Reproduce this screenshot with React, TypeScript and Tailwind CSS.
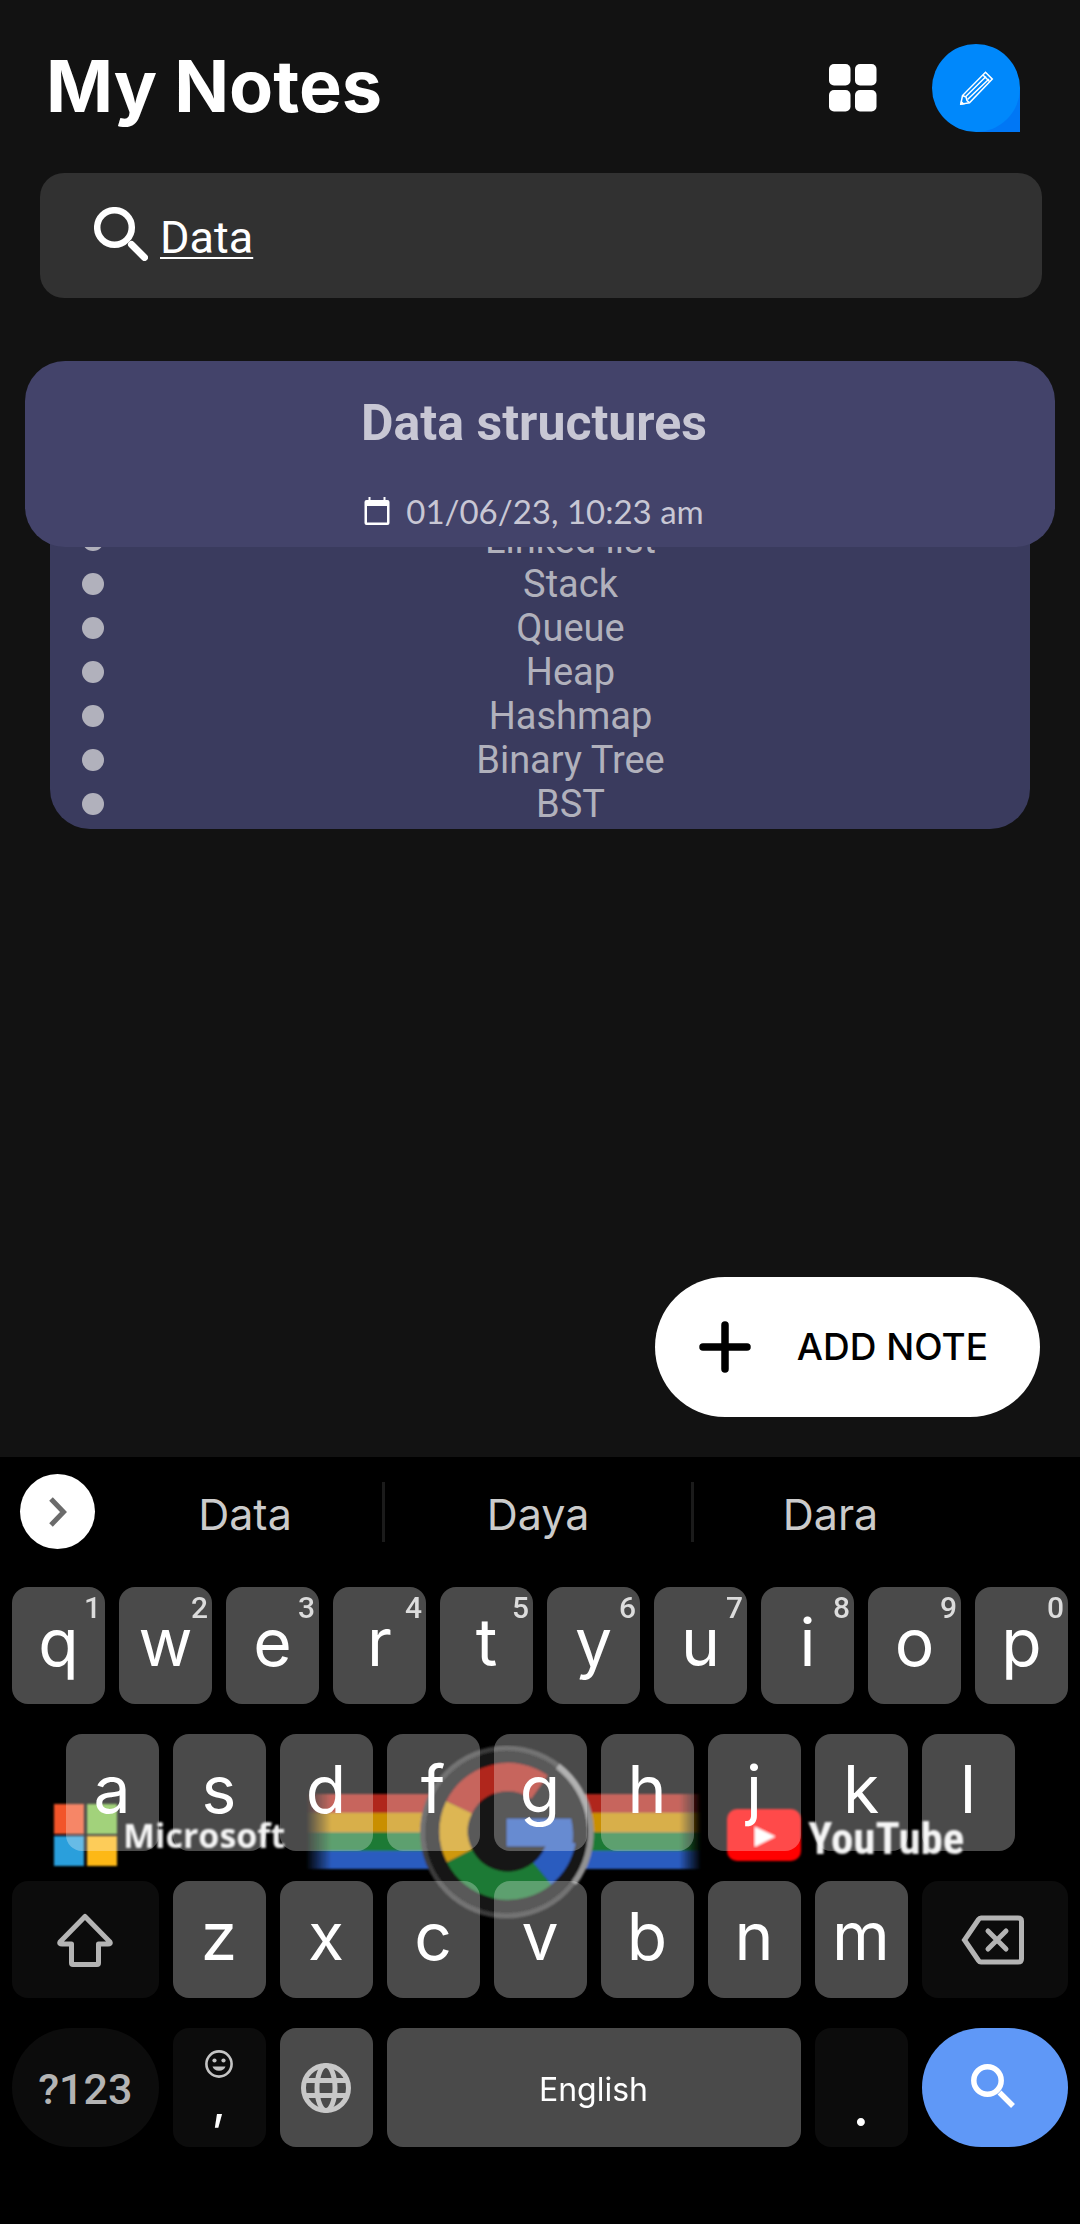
import React from "react";

const listItems = ["Linked list", "Stack", "Queue", "Heap", "Hashmap", "Binary Tree", "BST"];
const topRow = ["q", "w", "e", "r", "t", "y", "u", "i", "o", "p"];
const homeRow = ["a", "s", "d", "f", "g", "h", "j", "k", "l"];
const bottomRow = ["z", "x", "c", "v", "b", "n", "m"];

function GridIcon() {
  return (
    <svg viewBox="0 0 48 48" className="size-12" fill="white" aria-hidden="true">
      <rect x="0" y="0" width="21.5" height="21.5" rx="5" />
      <rect x="26" y="0" width="21.5" height="21.5" rx="5" />
      <rect x="0" y="26" width="21.5" height="21.5" rx="5" />
      <rect x="26" y="26" width="21.5" height="21.5" rx="5" />
    </svg>
  );
}

function PencilBadge() {
  return (
    <svg viewBox="0 0 88 88" className="size-22" aria-hidden="true">
      <path d="M44 44H88V88H44Z" fill="#0077f5" />
      <circle cx="44" cy="44" r="44" fill="#0088fb" />
      <g fill="none" stroke="white" strokeWidth="1.5">
        <path d="M28.8 60.2L30.5 51.5L53.5 28.3L60.3 35.1L37.5 58.8Z" />
        <path d="M30.5 51.5L34 53L35 56.5L37.5 58.8" />
        <path d="M51 31L57.8 37.8M33.8 52.5L54 32.5M35.5 55.5L57 35" />
      </g>
      <path d="M28 61L29 56.5L33 60.3Z" fill="white" />
    </svg>
  );
}

function SearchIcon() {
  return (
    <svg viewBox="0 0 54 54" className="size-[54px] shrink-0" fill="none" stroke="white" aria-hidden="true">
      <circle cx="20.5" cy="20.5" r="17.3" strokeWidth="6.5" />
      <path d="M37.5 37.5L50.5 50.5" strokeWidth="7" strokeLinecap="round" />
    </svg>
  );
}

function CalendarIcon() {
  return (
    <svg viewBox="0 0 26 28" className="h-7 w-[26px]" fill="white" aria-hidden="true">
      <path
        fillRule="evenodd"
        d="M4.500 0H6.500V3H19.500V0H21.500V3H23.500A2 2 0 0 1 25.500 5V26A2 2 0 0 1 23.500 28H2.500A2 2 0 0 1 0.500 26V5A2 2 0 0 1 2.500 3H4.500ZM3 9V25.500H23V9Z"
      />
    </svg>
  );
}

function KeyboardArt() {
  return (
    <svg
      viewBox="0 0 1080 176"
      className="pointer-events-none absolute inset-x-0 top-72 w-full"
      aria-hidden="true"
    >
      <defs>
        <linearGradient id="fadeLeft" x1="0" x2="1" y1="0" y2="0">
          <stop offset="0" stopColor="black" />
          <stop offset="0.2" stopColor="white" />
        </linearGradient>
        <linearGradient id="fadeRight" x1="0" x2="1" y1="0" y2="0">
          <stop offset="0.82" stopColor="white" />
          <stop offset="1" stopColor="black" />
        </linearGradient>
        <mask id="stripeMask">
          <rect x="306" y="40" width="127" height="95" fill="url(#fadeLeft)" />
          <rect x="580" y="40" width="121" height="95" fill="url(#fadeRight)" />
        </mask>
        <filter id="soft">
          <feGaussianBlur stdDeviation="0.8" />
        </filter>
      </defs>
      <g filter="url(#soft)">
        <rect x="54" y="59" width="30" height="30" fill="#f2542b" />
        <rect x="87" y="59" width="30" height="30" fill="#7cc044" />
        <rect x="54" y="91" width="30" height="30" fill="#2b9fdc" />
        <rect x="87" y="91" width="30" height="30" fill="#fdb813" />
        <text x="123" y="103" fill="#f2f2f2" fontSize="34" fontWeight="700" fontFamily="'Open Sans', sans-serif">
          Microsoft
        </text>

        <g mask="url(#stripeMask)">
          <rect x="300" y="49" width="410" height="19" fill="#b0281c" />
          <rect x="300" y="68" width="410" height="19" fill="#c98f05" />
          <rect x="300" y="87" width="410" height="19" fill="#1c7a34" />
          <rect x="300" y="106" width="410" height="18" fill="#2a5cbf" />
        </g>

        <circle cx="506.500" cy="87" r="86" fill="#151515" />
        <circle cx="506.500" cy="87" r="84" fill="none" stroke="#3a3a3a" strokeWidth="5" />
        <path d="M558 21A84 84 0 0 1 574 138" fill="none" stroke="#929292" strokeWidth="6" />
        <g fill="none" strokeWidth="28">
          <path d="M459 62.500A54.500 54.500 0 0 1 539.300 42" stroke="#b0281c" />
          <path d="M459.500 111A54.500 54.500 0 0 1 459 62.500" stroke="#cf980f" />
          <path d="M542.300 128.500A54.500 54.500 0 0 1 459.500 111" stroke="#1c7a34" />
          <path d="M561.500 96A54.500 54.500 0 0 1 542.300 128.500" stroke="#2a5cbf" />
        </g>
        <path d="M507 74H571Q574 88 572 101H507Z" fill="#2a5cbf" />

        <rect x="727" y="64" width="74" height="52" rx="10" fill="#ff0000" />
        <path d="M755 82L775 91.500L755 101.500Z" fill="white" />
        <text
          x="808"
          y="109"
          fill="#f2f2f2"
          fontSize="45"
          fontWeight="700"
          fontFamily="'Roboto Condensed', 'Liberation Sans Narrow', Roboto, sans-serif"
        >
          YouTube
        </text>
      </g>
    </svg>
  );
}

function ShiftIcon() {
  return (
    <svg viewBox="0 0 56 56" className="size-14" fill="none" stroke="#b4b4b4" strokeWidth="5" strokeLinejoin="round" aria-hidden="true">
      <path d="M28 4.500L53 30Q54 32 51 32H41.500V51Q41.500 52.500 40 52.500H16Q14.500 52.500 14.500 51V32H5Q2 32 3 30Z" />
    </svg>
  );
}

function BackspaceIcon() {
  return (
    <svg viewBox="0 0 64 50" className="h-[50px] w-16" fill="none" stroke="#b4b4b4" strokeWidth="5" aria-hidden="true">
      <path d="M20 3H57Q60.500 3 60.500 6V44Q60.500 47 57 47H20Q18.500 47 17.500 45.500L3.500 25L17.500 4.500Q18.500 3 20 3Z" />
      <path d="M27 16L45 34M45 16L27 34" strokeLinecap="round" />
    </svg>
  );
}

function GlobeIcon() {
  return (
    <svg viewBox="0 0 50 50" className="size-[50px]" fill="none" stroke="#c8c8c8" strokeWidth="5" aria-hidden="true">
      <circle cx="25" cy="25" r="22.500" />
      <ellipse cx="25" cy="25" rx="9" ry="22.500" />
      <path d="M4 17.500H46M4 32.500H46" />
    </svg>
  );
}

function SmileIcon() {
  return (
    <svg viewBox="0 0 28 28" className="size-7" aria-hidden="true">
      <circle cx="14" cy="14" r="12.600" fill="none" stroke="#c4c4c4" strokeWidth="2.600" />
      <circle cx="9.500" cy="10.500" r="2.100" fill="#c4c4c4" />
      <circle cx="18.500" cy="10.500" r="2.100" fill="#c4c4c4" />
      <path d="M7.500 16.500H20.500A6.700 5.500 0 0 1 7.500 16.500Z" fill="#c4c4c4" />
    </svg>
  );
}

function LetterKey({ letter, hint }: { letter: string; hint?: string }) {
  return (
    <button
      type="button"
      className="relative col-span-2 flex h-[117px] items-center justify-center rounded-2xl bg-white/29 pb-2 text-[66px] leading-none text-white"
    >
      {letter}
      {hint && (
        <span className="absolute top-1.5 right-1 font-['Roboto',sans-serif] text-[30px] leading-none font-medium text-[#dcdcdc]">
          {hint}
        </span>
      )}
    </button>
  );
}

function Keyboard() {
  return (
    <section aria-label="Keyboard" className="relative bg-black pb-[77px] font-['Inter',sans-serif]">
      <KeyboardArt />
      <div className="relative grid h-[130px] grid-cols-[108px_277fr_309fr_273fr_113px] items-start pt-[17px] text-[43px] leading-none text-[#cbcbcb]">
        <button
          type="button"
          aria-label="Expand toolbar"
          className="ml-5 flex size-[75px] items-center justify-center rounded-full bg-white"
        >
          <svg viewBox="0 0 20 32" className="h-8 w-5" fill="none" stroke="#6b6b6b" strokeWidth="5" aria-hidden="true">
            <path d="M3 3L15.500 16L3 29" />
          </svg>
        </button>
        <button type="button" className="mt-2 h-15 border-r-3 border-[#1b1b1b] pt-1">Data</button>
        <button type="button" className="mt-2 h-15 border-r-3 border-[#1b1b1b] pt-1">Daya</button>
        <button type="button" className="mt-2 h-15 pt-1">Dara</button>
      </div>

      <div className="relative grid grid-cols-20 gap-x-3.5 gap-y-[30px] px-3">
        {topRow.map((letter, i) => (
          <LetterKey key={letter} letter={letter} hint={String((i + 1) % 10)} />
        ))}

        <span />
        {homeRow.map((letter) => (
          <LetterKey key={letter} letter={letter} />
        ))}
        <span />

        <button type="button" aria-label="Shift" className="col-span-3 flex items-center justify-center rounded-2xl bg-[#0c0c0c]">
          <ShiftIcon />
        </button>
        {bottomRow.map((letter) => (
          <LetterKey key={letter} letter={letter} />
        ))}
        <button type="button" aria-label="Backspace" className="col-span-3 flex items-center justify-center rounded-2xl bg-[#0c0c0c] pr-1">
          <BackspaceIcon />
        </button>

        <button
          type="button"
          className="col-span-3 h-[119px] rounded-full bg-[#0c0c0c] pt-1 font-['Roboto',sans-serif] text-[43px] font-medium text-[#b4b4b4]"
        >
          ?123
        </button>
        <button
          type="button"
          className="col-span-2 flex flex-col items-center rounded-2xl bg-[#0c0c0c] pt-[22px] text-[50px] leading-[46px] text-white"
        >
          <SmileIcon />
          <span>,</span>
        </button>
        <button type="button" aria-label="Change language" className="col-span-2 flex items-center justify-center rounded-2xl bg-white/29">
          <GlobeIcon />
        </button>
        <button type="button" className="col-span-8 rounded-2xl bg-white/29 pt-1 text-[32px] text-white">
          English
        </button>
        <button
          type="button"
          className="col-span-2 rounded-2xl bg-[#0c0c0c] pt-8 text-[60px] leading-none text-white"
        >
          .
        </button>
        <button type="button" aria-label="Search" className="col-span-3 flex items-center justify-center rounded-full bg-[#5f98f7] pr-1 pb-1">
          <svg viewBox="0 0 44 44" className="size-11" fill="none" stroke="white" strokeWidth="5.500" aria-hidden="true">
            <circle cx="16.500" cy="16.500" r="13.700" />
            <path d="M28.500 28.500L42 42" />
          </svg>
        </button>
      </div>
    </section>
  );
}

export default function App() {
  return (
    <div className="flex min-h-screen flex-col bg-[#121212] font-['Roboto',sans-serif]">
      <main className="flex flex-1 flex-col">
        <header className="flex items-center pt-11 pr-15 pl-[46px]">
          <h1 className="flex-1 pb-1 font-['Inter',sans-serif] text-[72px] leading-[84px] font-bold text-white">My Notes</h1>
          <button type="button" aria-label="Grid view" className="mr-[55px]">
            <GridIcon />
          </button>
          <button type="button" aria-label="Edit">
            <PencilBadge />
          </button>
        </header>

        <label className="mt-[41px] mr-[38px] ml-10 flex h-[125px] items-center gap-3 rounded-3xl bg-[#313131] pb-1 pl-[54px]">
          <SearchIcon />
          <input
            type="text"
            aria-label="Search notes"
            defaultValue="Data"
            className="min-w-0 flex-1 bg-transparent pt-2 text-[45px] text-white underline decoration-2 underline-offset-4 outline-none"
          />
        </label>

        <article className="mt-[63px] mr-[25px] ml-[25px]">
          <div className="relative z-10 flex h-[186px] flex-col items-center rounded-[40px] bg-[#43436a] pt-8 pr-3 text-[#c8c7d4]">
            <h2 className="text-[50px] leading-[60px] font-bold">Data structures</h2>
            <p className="mt-[38px] flex items-center gap-4 font-['Lato',sans-serif] text-[33px] leading-10">
              <CalendarIcon />
              01/06/23, 10:23 am
            </p>
          </div>
          <ul className="-mt-[29px] mr-[25px] ml-[25px] rounded-b-[40px] bg-[#3a3b5e] pb-[3px] pl-8 text-[38px] leading-[44px] text-[#b1b1bc]">
            {listItems.map((item) => (
              <li key={item} className="flex items-center">
                <span className="mr-2 size-[22px] rounded-full bg-[#b1b1bc]" />
                <span className="flex-1 pr-px text-center">{item}</span>
              </li>
            ))}
          </ul>
        </article>

        <button
          type="button"
          className="mt-auto mr-10 mb-10 ml-auto flex h-[140px] items-center gap-[46px] rounded-full bg-white pr-[52px] pl-11 font-['Inter',sans-serif] text-[37px] font-medium text-black"
        >
          <svg viewBox="0 0 52 52" className="size-[52px]" fill="none" stroke="black" strokeWidth="7.500" strokeLinecap="round" aria-hidden="true">
            <path d="M26 4V48M4 26H48" />
          </svg>
          ADD NOTE
        </button>
      </main>
      <Keyboard />
    </div>
  );
}
